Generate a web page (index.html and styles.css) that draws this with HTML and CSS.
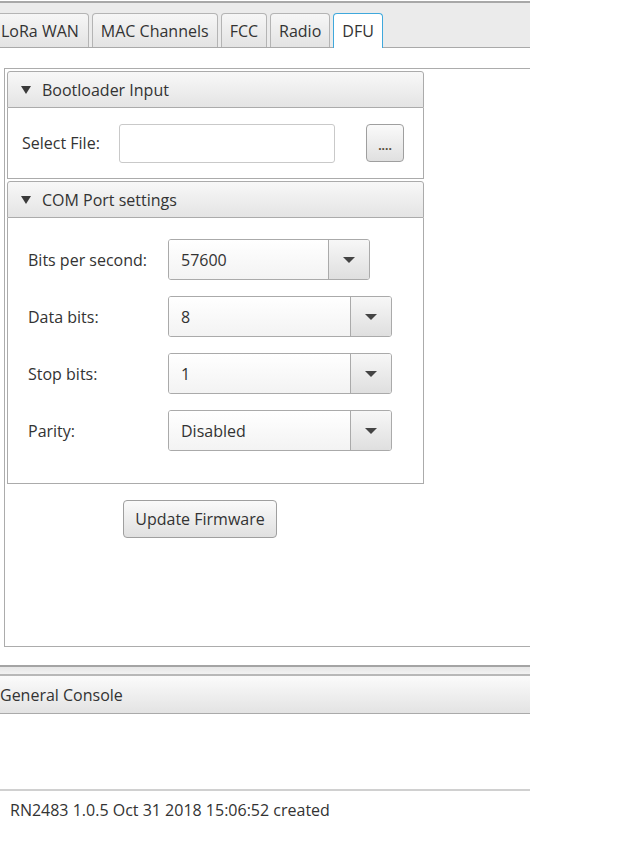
FILE: index.html
```html
<!DOCTYPE html>
<html>
<head>
<meta charset="utf-8">
<link rel="stylesheet" href="styles.css">
</head>
<body>
<div class="app">
  <div class="tabbar">
    <div class="tab tab-first">LoRa WAN</div>
    <div class="tab">MAC Channels</div>
    <div class="tab">FCC</div>
    <div class="tab">Radio</div>
    <div class="tab tab-active">DFU</div>
  </div>
  <div class="content">
    <div class="pane">
      <div class="titled">
        <div class="titled-head"><span class="tri"></span>Bootloader Input</div>
        <div class="titled-body file-body">
          <span class="lbl">Select File:</span>
          <div class="field"></div>
          <div class="btn btn-dots">....</div>
        </div>
      </div>
      <div class="titled">
        <div class="titled-head"><span class="tri"></span>COM Port settings</div>
        <div class="titled-body com-body">
          <div class="row">
            <span class="lbl lbl-w">Bits per second:</span>
            <div class="combo combo-short"><span class="combo-val">57600</span><span class="combo-arrow"><span class="arr"></span></span></div>
          </div>
          <div class="row">
            <span class="lbl lbl-w">Data bits:</span>
            <div class="combo"><span class="combo-val">8</span><span class="combo-arrow"><span class="arr"></span></span></div>
          </div>
          <div class="row">
            <span class="lbl lbl-w">Stop bits:</span>
            <div class="combo"><span class="combo-val">1</span><span class="combo-arrow"><span class="arr"></span></span></div>
          </div>
          <div class="row">
            <span class="lbl lbl-w">Parity:</span>
            <div class="combo"><span class="combo-val">Disabled</span><span class="combo-arrow"><span class="arr"></span></span></div>
          </div>
        </div>
      </div>
      <div class="btn btn-update">Update Firmware</div>
    </div>
  </div>
  <div class="divider"></div>
  <div class="console-head">General Console</div>
  <div class="console-body"></div>
  <div class="status">RN2483 1.0.5 Oct 31 2018 15:06:52 created</div>
</div>
</body>
</html>
```

FILE: styles.css
```css
html, body {
  margin: 0;
  padding: 0;
  background: #ffffff;
}
body {
  font-family: "Open Sans", "Noto Sans", sans-serif;
  font-size: 16px;
  color: #333333;
}
.app {
  width: 530px;
  overflow: hidden;
  display: flex;
  flex-direction: column;
}
.tabbar {
  margin-top: 1px;
  height: 44px;
  border-top: 2px solid #a8a8a8;
  border-bottom: 1px solid #a9a9a9;
  background: #ebebeb;
  display: flex;
  align-items: flex-end;
  gap: 3px;
  margin-left: -14px;
}
.tab {
  height: 34px;
  box-sizing: border-box;
  border: 1px solid #b4b4b4;
  border-bottom: none;
  border-radius: 4px 4px 0 0;
  background: linear-gradient(#f6f6f6, #e3e3e3);
  padding: 0 8px;
  display: flex;
  align-items: center;
  white-space: nowrap;
}
.tab-first {
  padding-left: 14px;
  padding-right: 9px;
}
.tab-active {
  background: #ffffff;
  border: 1px solid #3fa8dc;
  border-bottom: none;
  height: 35px;
  margin-bottom: -1px;
  padding: 0 8px;
}
.content {
  height: 616px;
  padding-top: 20px;
  padding-left: 4px;
  box-sizing: border-box;
}
.pane {
  width: 600px;
  height: 579px;
  box-sizing: border-box;
  border: 1px solid #acacac;
  padding: 2px 0 0 2px;
  display: flex;
  flex-direction: column;
  gap: 2px;
}
.titled {
  width: 417px;
  display: flex;
  flex-direction: column;
}
.titled-head {
  height: 37px;
  box-sizing: border-box;
  border: 1px solid #ababab;
  border-radius: 3px 3px 0 0;
  background: linear-gradient(#f8f8f8, #e4e4e4);
  display: flex;
  align-items: center;
  padding-left: 13px;
}
.tri {
  width: 0;
  height: 0;
  border-left: 5px solid transparent;
  border-right: 5px solid transparent;
  border-top: 8px solid #3a3a3a;
  margin-right: 11px;
  margin-top: 1px;
}
.titled-body {
  border: 1px solid #ababab;
  border-top: none;
  box-sizing: border-box;
  background: #ffffff;
}
.file-body {
  height: 71px;
  display: flex;
  align-items: center;
  padding-left: 14px;
}
.file-body .lbl {
  width: 97px;
}
.field {
  width: 216px;
  height: 39px;
  box-sizing: border-box;
  border: 1px solid #c9c9c9;
  border-radius: 3px;
  background: #ffffff;
  margin-right: 31px;
}
.btn {
  box-sizing: border-box;
  border: 1px solid #9f9f9f;
  border-radius: 4px;
  background: linear-gradient(#fafafa, #e0e0e0);
  display: flex;
  align-items: center;
  justify-content: center;
}
.btn-dots {
  width: 38px;
  height: 38px;
  font-size: 12px;
  font-weight: bold;
  padding-top: 4px;
  color: #554a3a;
}
.com-body {
  height: 266px;
  padding: 21px 0 0 20px;
  display: flex;
  flex-direction: column;
  gap: 16px;
}
.row {
  display: flex;
  align-items: center;
}
.lbl-w {
  width: 140px;
}
.combo {
  width: 224px;
  height: 41px;
  box-sizing: border-box;
  border: 1px solid #aaaaaa;
  border-radius: 3px;
  display: flex;
  overflow: hidden;
}
.combo-short {
  width: 202px;
}
.combo-val {
  flex: 1;
  background: linear-gradient(#ffffff, #f3f3f3);
  padding-left: 12px;
  display: flex;
  align-items: center;
}
.combo-arrow {
  width: 40px;
  border-left: 1px solid #aaaaaa;
  background: linear-gradient(#f7f7f7, #dfdfdf);
  display: flex;
  align-items: center;
  justify-content: center;
}
.arr {
  width: 0;
  height: 0;
  border-left: 6px solid transparent;
  border-right: 6px solid transparent;
  border-top: 6px solid #444444;
}
.btn-update {
  align-self: flex-start;
  margin-top: 14px;
  margin-left: 116px;
  width: 154px;
  height: 38px;
}
.divider {
  height: 11px;
  margin-top: 1px;
  box-sizing: border-box;
  border-top: 2px solid #a4a4a4;
  border-bottom: 2px solid #b8b8b8;
  background: linear-gradient(#e6e6e6, #f2f2f2);
}
.console-head {
  height: 38px;
  box-sizing: border-box;
  border-bottom: 1px solid #aaaaaa;
  background: linear-gradient(#fbfbfb, #e3e3e3);
  display: flex;
  align-items: center;
  padding-left: 0;
}
.console-body {
  height: 75px;
  border-bottom: 2px solid #d0d0d0;
}
.status {
  height: 50px;
  padding-left: 10px;
  padding-top: 8px;
  box-sizing: border-box;
}
```
